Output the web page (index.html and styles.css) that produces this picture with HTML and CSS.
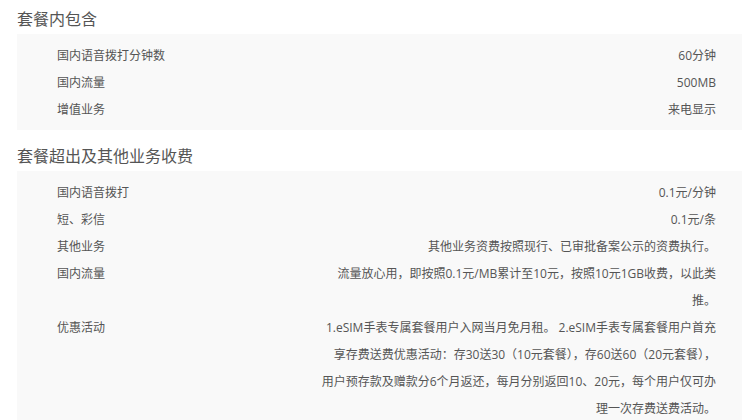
FILE: index.html
```html
<!DOCTYPE html>
<html lang="zh-CN">
<head>
    <meta charset="UTF-8">
    <title>套餐详情</title>
    <link rel="stylesheet" href="styles.css">
</head>
<body>

    <div class="section">
        <h3 class="section-title">套餐内包含</h3>
        <div class="panel">
            <div class="row">
                <span class="label">国内语音拨打分钟数</span>
                <span class="value">60分钟</span>
            </div>
            <div class="row">
                <span class="label">国内流量</span>
                <span class="value">500MB</span>
            </div>
            <div class="row">
                <span class="label">增值业务</span>
                <span class="value">来电显示</span>
            </div>
        </div>
    </div>

    <div class="section">
        <h3 class="section-title">套餐超出及其他业务收费</h3>
        <div class="panel">
            <div class="row">
                <span class="label">国内语音拨打</span>
                <span class="value">0.1元/分钟</span>
            </div>
            <div class="row">
                <span class="label">短、彩信</span>
                <span class="value">0.1元/条</span>
            </div>
            <div class="row">
                <span class="label">其他业务</span>
                <span class="value">其他业务资费按照现行、已审批备案公示的资费执行。</span>
            </div>
            <div class="row">
                <span class="label">国内流量</span>
                <span class="value">流量放心用，即按照0.1元/MB累计至10元，按照10元1GB收费，以此类<br>推。</span>
            </div>
            <div class="row">
                <span class="label">优惠活动</span>
                <span class="value">1.eSIM手表专属套餐用户入网当月免月租。 2.eSIM手表专属套餐用户首充<br>享存费送费优惠活动：存30送30（10元套餐），存60送60（20元套餐），<br>用户预存款及赠款分6个月返还，每月分别返回10、20元，每个用户仅可办<br>理一次存费送费活动。</span>
            </div>
        </div>
    </div>

</body>
</html>
```

FILE: styles.css
```css
body {
    margin: 0;
    background: #fff;
    color: #555;
    font-family: "Open Sans", "Noto Sans CJK SC", sans-serif;
}

.section {
    margin-bottom: 7px;
}

.section-title {
    margin: 0;
    padding: 6px 0 2px 17px;
    font-size: 16px;
    font-weight: normal;
    line-height: 26px;
    color: #555;
}

.panel {
    margin-left: 17px;
    padding: 8px 26px 7px 40px;
    background: #f9f9f9;
}

.row {
    display: flex;
    justify-content: space-between;
    font-size: 12px;
    line-height: 27px;
}

.label {
    flex: 1;
}

.value {
    text-align: right;
    white-space: nowrap;
}
```
